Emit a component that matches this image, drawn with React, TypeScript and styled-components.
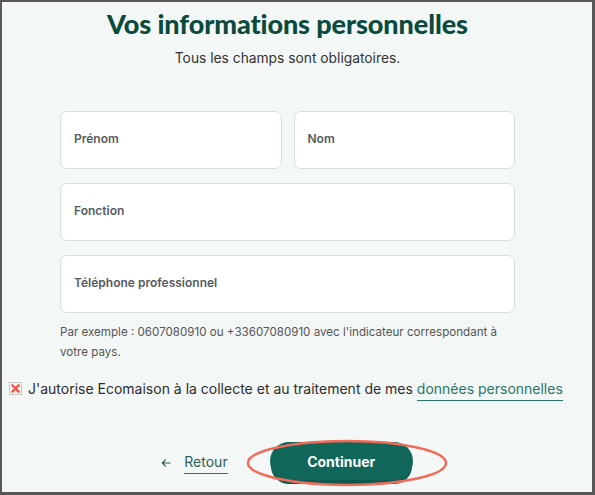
import styled, { createGlobalStyle } from "styled-components";
import { ReactElement } from "react";

const GlobalStyle = createGlobalStyle`
  html, body {
    margin: 0;
    padding: 0;
    background: #f3f7f6;
  }
  * {
    box-sizing: border-box;
  }
`;

const Frame = styled.main`
  width: 595px;
  height: 495px;
  border-style: solid;
  border-color: #585858;
  border-width: 2px 3px 3px 2px;
  background: #f3f7f6;
  font-family: Inter, "Liberation Sans", sans-serif;
  color: #2d2d2d;
  display: flex;
  flex-direction: column;
  position: relative;
  overflow: hidden;
`;

const Column = styled.section`
  width: 455px;
  margin-left: 58px;
  display: flex;
  flex-direction: column;
`;

const Title = styled.h1`
  margin: 5px -40px 0;
  text-align: center;
  font-family: Lato, Inter, sans-serif;
  font-size: 27px;
  line-height: 34px;
  font-weight: 900;
  color: #0b4a3d;
  letter-spacing: -0.1px;
`;

const Subtitle = styled.p`
  margin: 8px 0 0;
  text-align: center;
  font-size: 13.8px;
  line-height: 18px;
  color: #333;
`;

const Fields = styled.div`
  margin-top: 44px;
  display: flex;
  flex-direction: column;
  gap: 14px;
`;

const Row = styled.div`
  display: grid;
  grid-template-columns: 1fr 1fr;
  gap: 12px;
`;

const Field = styled.label`
  height: 58px;
  display: flex;
  align-items: center;
  padding: 0 13px 3px;
  background: #fff;
  border: 1px solid #d7dee0;
  border-radius: 7px;
  font-size: 12px;
  font-weight: 600;
  color: #555b60;
`;

const Hint = styled.p`
  margin: -5px 0 0;
  font-size: 11.6px;
  line-height: 20px;
  color: #555;
`;

const Consent = styled.div`
  margin: 18px 0 0 7px;
  display: flex;
  align-items: center;
  gap: 6px;
  font-size: 14px;
  color: #2d2d2d;
`;

const Box = styled.span`
  width: 13px;
  height: 13px;
  border: 1px solid #c9c9c9;
  background: #f6f6f6;
  display: flex;
  align-items: center;
  justify-content: center;
`;

const TextLink = styled.a`
  color: #2a766c;
  text-decoration: none;
  border-bottom: 1.5px solid #2a766c;
  padding-bottom: 3px;
`;

const Actions = styled.div`
  margin-top: auto;
  margin-bottom: 8px;
  display: flex;
  align-items: center;
  justify-content: center;
  gap: 42px;
  padding-right: 20px;
`;

const Back = styled.a`
  display: flex;
  align-items: center;
  gap: 13px;
  font-size: 14px;
  color: #2a5e57;
  text-decoration: none;
  span {
    border-bottom: 1.5px solid #2a766c;
    padding-bottom: 3px;
  }
`;

const Button = styled.button`
  width: 143px;
  height: 38px;
  border: none;
  border-radius: 20px;
  background: #11665a;
  box-shadow: 0 5px 0 -1px #0f5a4f;
  color: #fff;
  font-family: inherit;
  font-size: 14px;
  font-weight: 700;
  margin-bottom: 4px;
`;

const Highlight = styled.svg`
  position: absolute;
  left: 243px;
  top: 435px;
  pointer-events: none;
`;

const CrossMark = (): ReactElement => (
  <svg width="9" height="9" viewBox="0 0 10 10">
    <path d="M1.5 1.5 L8.5 8.5 M8.5 1.5 L1.5 8.5" stroke="#f0564a" strokeWidth="2.6" strokeLinecap="round" />
  </svg>
);

const ArrowLeft = (): ReactElement => (
  <svg width="10" height="10" viewBox="0 0 10 10" fill="none">
    <path d="M9 5H1.5M4.5 1.8L1.3 5l3.2 3.2" stroke="#2a5e57" strokeWidth="1.2" strokeLinecap="round" strokeLinejoin="round" />
  </svg>
);

export default function App(): ReactElement {
  return (
    <>
      <GlobalStyle />
      <Frame>
        <Column>
          <Title>Vos informations personnelles</Title>
          <Subtitle>Tous les champs sont obligatoires.</Subtitle>
          <Fields>
            <Row>
              <Field>Prénom</Field>
              <Field>Nom</Field>
            </Row>
            <Field>Fonction</Field>
            <Field>Téléphone professionnel</Field>
            <Hint>
              Par exemple : 0607080910 ou +33607080910 avec l'indicateur correspondant à
              <br />
              votre pays.
            </Hint>
          </Fields>
        </Column>
        <Consent>
          <Box>
            <CrossMark />
          </Box>
          <span>
            J'autorise Ecomaison à la collecte et au traitement de mes{" "}
            <TextLink>données personnelles</TextLink>
          </span>
        </Consent>
        <Actions>
          <Back>
            <ArrowLeft />
            <span>Retour</span>
          </Back>
          <Button>Continuer</Button>
        </Actions>
        <Highlight width="204" height="52" viewBox="0 0 204 52">
          <ellipse cx="102" cy="26" rx="99" ry="22" fill="none" stroke="#f26a58" strokeWidth="2.5" />
        </Highlight>
      </Frame>
    </>
  );
}
